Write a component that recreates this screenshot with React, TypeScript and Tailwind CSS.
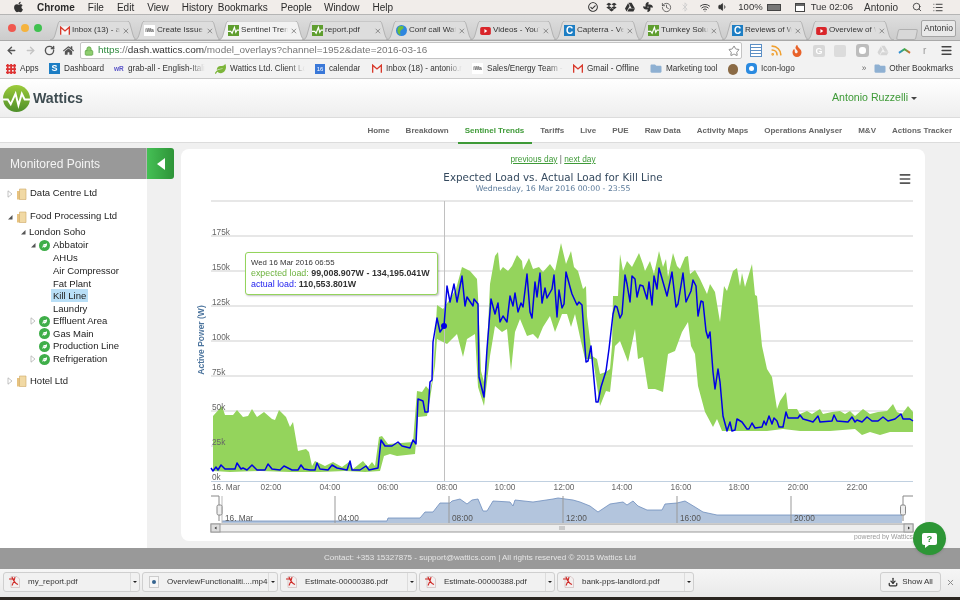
import { ArrowLeft, ArrowRight, RotateCw, Star, Lock, X, Search, List, Wifi, Volume1, History, Bluetooth, Download, Menu, Rss } from 'lucide-react';
import { FaApple, FaDropbox, FaGoogleDrive, FaHome, FaFolder, FaLeaf, FaRegCheckCircle, FaFan, FaFire } from 'react-icons/fa';

const UI = "font-['Liberation_Sans',Arial,sans-serif]";

const upper = [
  [213,417],[222,407],[225,416],[233,416],[237,411],[243,418],[248,417],[252,410],[257,418],[264,413],[272,420],[275,421],[279,411],[286,418],[290,428],[293,423],[298,452],[306,450],[309,453],[312,467],[315,462],[325,467],[333,463],[342,468],[349,463],[353,470],[363,462],[368,468],[372,463],[375,467],[379,438],[382,437],[388,445],[413,443],[417,392],[422,393],[426,387],[430,392],[433,377],[437,306],[443,310],[450,300],[456,290],[462,268],[470,272],[477,280],[478,297],[481,372],[484,383],[487,350],[490,285],[495,257],[498,253],[500,272],[503,268],[508,272],[512,267],[517,256],[522,262],[523,271],[529,259],[533,270],[539,268],[543,273],[550,265],[555,272],[561,244],[566,265],[571,252],[574,268],[578,272],[583,290],[586,287],[587,317],[592,357],[597,360],[600,375],[606,373],[610,370],[612,347],[613,297],[618,297],[620,255],[623,272],[627,262],[632,268],[639,254],[643,265],[645,272],[650,262],[654,275],[659,252],[663,268],[666,260],[668,278],[673,254],[677,267],[680,270],[685,258],[688,257],[690,275],[695,271],[700,280],[707,295],[710,285],[715,293],[720,323],[724,287],[727,292],[733,272],[737,269],[740,287],[742,274],[745,288],[752,265],[755,296],[757,297],[762,347],[767,370],[772,378],[777,410],[780,402],[786,393],[788,410],[797,410],[800,415],[807,412],[812,415],[820,410],[823,415],[832,413],[840,412],[845,415],[850,412],[855,417],[863,410],[870,415],[878,413],[887,412],[893,405],[897,413],[902,415],[908,407],[913,413],
];
const lower = [
  [213,472],[230,473],[260,472],[290,473],[320,473],[345,472],[365,473],[380,472],[384,457],[390,455],[397,457],[415,455],[418,418],[427,417],[430,400],[435,367],[437,340],[447,345],[452,340],[457,335],[463,358],[467,340],[475,335],[478,388],[484,407],[487,383],[490,357],[495,327],[502,333],[507,330],[511,372],[515,333],[520,320],[527,337],[533,335],[538,340],[543,328],[550,317],[555,333],[562,315],[567,315],[571,328],[575,315],[580,338],[585,360],[593,360],[600,407],[606,392],[610,393],[615,347],[620,342],[628,363],[635,330],[638,360],[643,358],[648,390],[655,390],[663,393],[668,355],[675,352],[682,333],[688,323],[691,347],[695,355],[698,387],[705,413],[713,428],[717,420],[722,432],[733,432],[767,432],[783,430],[800,432],[830,432],[855,430],[862,436],[870,433],[880,436],[890,433],[913,433],
];
const actual = [
  [211,469],[213,472],[216,468],[218,471],[221,466],[225,470],[235,470],[237,464],[241,470],[243,469],[247,471],[252,466],[257,471],[265,471],[268,465],[272,470],[280,471],[284,467],[292,471],[298,471],[301,466],[304,470],[310,471],[315,471],[317,464],[320,470],[328,471],[332,466],[337,469],[347,471],[350,462],[352,471],[360,471],[366,467],[369,471],[378,469],[381,441],[385,447],[392,447],[398,443],[402,447],[410,449],[413,441],[416,445],[418,400],[423,402],[425,413],[428,413],[430,383],[432,381],[433,343],[437,319],[440,333],[444,327],[447,287],[450,303],[454,285],[457,303],[462,277],[465,307],[467,298],[473,307],[474,300],[478,305],[479,378],[484,398],[487,350],[491,300],[495,315],[498,304],[500,323],[503,317],[507,323],[510,297],[513,307],[515,294],[518,313],[521,304],[523,308],[527,275],[530,313],[532,319],[535,283],[537,298],[540,274],[542,304],[545,289],[547,299],[552,290],[554,276],[557,318],[559,291],[562,309],[564,305],[566,273],[570,288],[572,295],[577,306],[579,303],[582,306],[586,363],[588,362],[591,347],[596,403],[598,403],[601,388],[606,372],[609,350],[613,315],[615,307],[617,308],[620,319],[622,315],[625,276],[627,285],[630,303],[632,277],[635,280],[637,298],[640,286],[643,287],[647,300],[649,283],[652,306],[654,277],[657,290],[659,269],[667,297],[672,273],[676,308],[678,305],[683,274],[686,303],[691,292],[693,281],[696,287],[698,317],[701,302],[703,303],[706,332],[708,339],[710,333],[713,373],[715,390],[718,370],[720,383],[723,417],[727,432],[730,423],[732,432],[735,431],[737,420],[742,423],[747,430],[749,430],[752,424],[755,429],[762,428],[764,422],[766,426],[769,417],[772,425],[774,419],[777,422],[779,428],[783,428],[786,413],[788,419],[798,419],[800,416],[803,420],[810,422],[813,423],[818,417],[820,423],[832,422],[834,416],[837,422],[848,423],[852,418],[855,423],[857,421],[862,423],[867,418],[872,422],[878,422],[883,418],[888,422],[895,420],[901,415],[903,420],[910,420],[913,422],
];
const navArea = [
  [222,522],[387,522],[388,519],[420,519],[425,513],[433,513],[440,504],[450,504],[452,502],[460,500],[467,505],[472,501],[478,500],[483,512],[487,512],[493,502],[510,503],[513,507],[515,501],[533,503],[553,500],[558,499],[573,501],[580,503],[590,507],[598,513],[610,505],[623,503],[627,506],[633,502],[638,507],[647,511],[662,511],[665,505],[677,504],[685,502],[695,508],[703,513],[717,516],[780,516],[902,516],
];
const pts = (a: number[][]) => a.map((p) => p.join(',')).join(' ');

const yTicks = [
  ['175k', 237], ['150k', 272], ['125k', 307], ['100k', 342], ['75k', 377], ['50k', 412], ['25k', 447], ['0k', 482],
] as const;
const xTicks = [['02:00', 271], ['04:00', 330], ['06:00', 388], ['08:00', 447], ['10:00', 505], ['12:00', 564], ['14:00', 622], ['16:00', 681], ['18:00', 739], ['20:00', 798], ['22:00', 857]] as const;
const navTicks = [['04:00', 335], ['08:00', 449], ['12:00', 563], ['16:00', 677], ['20:00', 791]] as const;

function WatticsIcon() {
  return (
    <svg viewBox="0 0 12 12" className="w-[11px] h-[11px] shrink-0">
      <rect width="12" height="12" fill="#5f9e2f" />
      <path d="M0 7h3l1.500 2L7 2.500 8.500 8 10 5.500h2" fill="none" stroke="#fff" strokeWidth="1.300" />
    </svg>
  );
}
function GmailIcon() {
  return (
    <svg viewBox="0 0 12 10" className="w-[10px] h-[9px] shrink-0">
      <rect width="12" height="10" fill="#f6f6f6" />
      <path d="M.8 10V1L6 5.500 11.200 1V10" fill="none" stroke="#d8392b" strokeWidth="1.600" />
    </svg>
  );
}
function IwaIcon() {
  return <span className="w-[11px] h-[11px] shrink-0 bg-white text-[5px] font-bold leading-[11px] text-[#555] text-center overflow-hidden">iWa</span>;
}
function YoutubeIcon() {
  return (
    <svg viewBox="0 0 12 9" className="w-[11px] h-[8px] shrink-0">
      <rect width="12" height="9" rx="2" fill="#d9252a" />
      <path d="M4.800 2.300 8 4.500 4.800 6.700z" fill="#fff" />
    </svg>
  );
}
function CapterraIcon() {
  return <span className="w-[11px] h-[11px] shrink-0 bg-[#1d7ec4] text-white text-[10px] font-bold leading-[11px] text-center">C</span>;
}
function GlobeIcon() {
  return (
    <svg viewBox="0 0 12 12" className="w-[11px] h-[11px] shrink-0">
      <circle cx="6" cy="6" r="6" fill="#2e86de" />
      <path d="M3 1.500 7 1c2 1 1.500 3-.5 4S4 8 5 11C2 10 0 6 3 1.500z" fill="#6fbf3a" />
    </svg>
  );
}
function PdfIcon() {
  return (
    <svg viewBox="0 0 12 12" className="w-[12px] h-[12px] shrink-0">
      <path d="M2 .5h6l2.500 2.500v8.500H2z" fill="#f4efef" stroke="#c9b3b3" strokeWidth=".6" />
      <path d="M0 3h6M3 1c1 3 2 6 6 7.500M3 9.500C4 7 5.500 5 6 1" fill="none" stroke="#cf2a27" strokeWidth="1.100" />
    </svg>
  );
}

const tabs = [
  { icon: <GmailIcon />, label: 'Inbox (13) - antonio' },
  { icon: <IwaIcon />, label: 'Create Issue - Wattics' },
  { icon: <WatticsIcon />, label: 'Sentinel Trends', active: true },
  { icon: <WatticsIcon />, label: 'report.pdf' },
  { icon: <GlobeIcon />, label: 'Conf call Wattics' },
  { icon: <YoutubeIcon />, label: 'Videos - YouTube' },
  { icon: <CapterraIcon />, label: 'Capterra - Vendor' },
  { icon: <WatticsIcon />, label: 'Turnkey Solutions' },
  { icon: <CapterraIcon />, label: 'Reviews of Wattics' },
  { icon: <YoutubeIcon />, label: 'Overview of Wattics' },
];

function Tab({ icon, label, active }: { icon: React.ReactNode; label: string; active?: boolean }) {
  return (
    <div className="relative w-[88px] h-[19px] -mr-[4px] shrink-0">
      <svg viewBox="0 0 88 19" className="absolute inset-0 w-full h-full">
        <path d="M0 19C3 19 4 17 5 14L8 3C8.500 1 9.500 0 11 0H77C78.500 0 79.500 1 80 3L83 14C84 17 85 19 88 19Z" fill={active ? '#f2f2f2' : '#dddddd'} stroke="#a9a9a9" strokeWidth=".8" />
      </svg>
      <div className="relative flex items-center h-full pl-[10px] pr-[8px] gap-[2px]">
        {icon}
        <span className="w-[49px] overflow-hidden whitespace-nowrap text-[8.100px] text-[#333] [mask-image:linear-gradient(to_right,black_88%,transparent)]">{label}</span>
        <X className="ml-auto w-[8px] h-[8px] text-[#777]" strokeWidth={2.500} />
      </div>
    </div>
  );
}

function BmFolder() {
  return <FaFolder className="w-[12px] h-[11px] text-[#8eb0d2] shrink-0" />;
}

const bookmarks = [
  { w: 'w-[43px]', icon: <span className="w-[10px] h-[10px] shrink-0 bg-[radial-gradient(#d33_1.500px,transparent_1.500px)] bg-[length:3.400px_3.400px]" />, label: 'Apps' },
  { w: 'w-[65px]', icon: <span className="w-[11px] h-[11px] shrink-0 bg-[#1d7ec4] text-white text-[9px] font-bold leading-[11px] text-center">S</span>, label: 'Dashboard' },
  { w: 'w-[101px]', icon: <span className="w-[10px] text-[6.500px] font-bold text-[#5a55c8] shrink-0">wR</span>, label: 'grab-all - English-Italian', fade: true },
  { w: 'w-[100px]', icon: <FaLeaf className="w-[11px] h-[10px] text-[#7cb53a] shrink-0" />, label: 'Wattics Ltd. Client Login', fade: true },
  { w: 'w-[57px]', icon: <span className="w-[10px] h-[10px] shrink-0 bg-[#3a78d8] text-white text-[6px] leading-[10px] text-center">16</span>, label: 'calendar' },
  { w: 'w-[100px]', icon: <GmailIcon />, label: 'Inbox (18) - antonio.ruzzelli', fade: true },
  { w: 'w-[101px]', icon: <IwaIcon />, label: 'Sales/Energy Team - Wattics', fade: true },
  { w: 'w-[77px]', icon: <GmailIcon />, label: 'Gmail - Offline' },
  { w: 'w-[78px]', icon: <BmFolder />, label: 'Marketing tool' },
  { w: 'w-[18px]', icon: <span className="w-[10px] h-[11px] shrink-0 rounded-full bg-[#8a6a45]" />, label: '' },
  { w: 'w-[64px]', icon: <span className="w-[11px] h-[11px] shrink-0 rounded-sm bg-[#2a8ae0] flex items-center justify-center"><span className="w-[5px] h-[5px] rounded-full bg-white" /></span>, label: 'Icon-logo' },
];

const navItems = ['Home', 'Breakdown', 'Sentinel Trends', 'Tariffs', 'Live', 'PUE', 'Raw Data', 'Activity Maps', 'Operations Analyser', 'M&V', 'Actions Tracker'];

function Caret({ open }: { open?: boolean }) {
  return open ? (
    <svg viewBox="0 0 6 6" className="w-[6px] h-[6px] shrink-0"><path d="M5.500 1v4.500H1z" fill="#555" /></svg>
  ) : (
    <svg viewBox="0 0 6 8" className="w-[6px] h-[8px] shrink-0"><path d="M1 .8 5 4 1 7.200z" fill="#fff" stroke="#aaa" strokeWidth=".7" /></svg>
  );
}
function TreeFolder() {
  return (
    <svg viewBox="0 0 11 12" className="w-[11px] h-[12px] shrink-0">
      <path d="M1 3h3v8.500H1z" fill="#e7c27f" />
      <path d="M3.500 1H10v10.500H3.500z" fill="#f1d9a4" stroke="#cfa865" strokeWidth=".6" />
    </svg>
  );
}
function Leaf() {
  return (
    <span className="w-[11px] h-[11px] shrink-0 rounded-full bg-[#3fae49] flex items-center justify-center">
      <FaLeaf className="w-[5px] h-[5px] text-white" />
    </span>
  );
}

function CompanyRow({ label, open, className }: { label: string; open?: boolean; className: string }) {
  return (
    <div className={`flex items-center h-[13px] pl-[6px] gap-[3px] ${className}`}>
      <span className="w-[7px] flex justify-center"><Caret open={open} /></span>
      <TreeFolder />
      <span>{label}</span>
    </div>
  );
}
function SiteRow({ label, caret, open }: { label: string; caret?: boolean; open?: boolean }) {
  return (
    <div className="flex items-center h-[12.670px] pl-[30px] gap-[3px]">
      <span className="w-[6px] flex justify-center">{caret && <Caret open={open} />}</span>
      <Leaf />
      <span>{label}</span>
    </div>
  );
}
function LeafRow({ label, selected }: { label: string; selected?: boolean }) {
  return (
    <div className="flex items-center h-[12.670px] pl-[51px]">
      <span className={`px-[2px] h-[13px] leading-[13px] ${selected ? 'bg-[#b9dff7]' : ''}`}>{label}</span>
    </div>
  );
}

function DownloadItem({ name, w }: { name: string; w: string }) {
  return (
    <div className={`flex ${w} h-[20px] border border-[#cfcfcf] rounded-[3px] bg-[#f1f1f1] shrink-0`}>
      <div className="flex-1 flex items-center pl-[5px] gap-[7px] min-w-0 overflow-hidden">
        {name.endsWith('mp4') ? (
          <span className="w-[10px] h-[12px] mx-[1px] shrink-0 bg-[#f6f6f6] border border-[#ccc] flex items-center justify-center"><span className="w-[4px] h-[4px] rounded-full bg-[#35648f]" /></span>
        ) : <PdfIcon />}
        <span className="text-[8px] text-[#333] whitespace-nowrap">{name}</span>
      </div>
      <div className="w-[9px] border-l border-[#dcdcdc] flex items-center justify-center shrink-0">
        <span className="border-x-[2px] border-t-[2px] border-x-transparent border-t-[#222]" />
      </div>
    </div>
  );
}

export default function App() {
  return (
    <div className={`relative w-[960px] h-[600px] overflow-hidden flex flex-col bg-[#f0f0f0] blur-[0.45px] ${UI}`}>
      {/* mac menu bar */}
      <div className="h-[14px] shrink-0 flex items-center bg-[#f1edea] text-[10px] text-[#2a2a2a]">
        <FaApple className="ml-[13px] w-[11px] h-[12px] text-[#333]" />
        <span className="ml-[13px] font-bold">Chrome</span>
        <span className="ml-[13px]">File</span>
        <span className="ml-[13px]">Edit</span>
        <span className="ml-[13px]">View</span>
        <span className="ml-[13px]">History</span>
        <span className="ml-[5px]">Bookmarks</span>
        <span className="ml-[13px]">People</span>
        <span className="ml-[12px]">Window</span>
        <span className="ml-[13px]">Help</span>
        <div className="ml-auto flex items-center text-[#333]">
          <FaRegCheckCircle className="w-[10px] h-[10px]" />
          <FaDropbox className="ml-[8px] w-[11px] h-[10px]" />
          <FaGoogleDrive className="ml-[8px] w-[10px] h-[10px]" />
          <FaFan className="ml-[8px] w-[10px] h-[10px]" />
          <History className="ml-[8px] w-[11px] h-[11px]" strokeWidth={1.500} />
          <Bluetooth className="ml-[8px] w-[10px] h-[10px] text-[#ccc]" />
          <Wifi className="ml-[9px] w-[12px] h-[11px]" />
          <Volume1 className="ml-[7px] w-[10px] h-[10px]" fill="#333" />
          <span className="ml-[10px] text-[9.500px]">100%</span>
          <span className="ml-[4px] w-[14px] h-[7px] border border-[#444] bg-[#777]" />
          <span className="ml-[14px] w-[10px] h-[9px] border border-[#444] bg-[linear-gradient(#666_2px,#fff_2px)]" />
          <span className="ml-[6px] text-[9.500px]">Tue 02:06</span>
          <span className="ml-[11px] text-[10px] font-medium">Antonio</span>
          <Search className="ml-[14px] w-[10px] h-[10px]" />
          <List className="ml-[10px] mr-[16px] w-[12px] h-[11px]" />
        </div>
      </div>

      {/* tab strip */}
      <div className="relative h-[27px] shrink-0 flex items-end bg-gradient-to-b from-[#dedede] to-[#cccccc] border-t border-[#b5b5b5] border-b border-b-[#a9a9a9]">
        <div className="flex gap-[5px] self-center ml-[8px] mr-[7px] w-[35px]">
          <span className="w-[8px] h-[8px] rounded-full bg-[#f0584f]" />
          <span className="w-[8px] h-[8px] rounded-full bg-[#f5b33d]" />
          <span className="w-[8px] h-[8px] rounded-full bg-[#3fc14f]" />
        </div>
        {tabs.map((t) => <Tab key={t.label} {...t} />)}
        <div className="ml-[7px] w-[20px] h-[11px] rounded-[2px] border border-[#b0b0b0] bg-[#d8d8d8] -skew-x-12" />
        <div className="ml-auto mr-[4px] self-start mt-[5px] w-[35px] h-[17px] rounded-[2px] border border-[#a5a5a5] bg-[#e9e9e9] text-[8.500px] text-[#333] text-center leading-[15px]">Antonio</div>
      </div>

      {/* toolbar */}
      <div className="h-[19px] shrink-0 flex items-center bg-[#f2f2f2]">
        <ArrowLeft className="ml-[6px] w-[11px] h-[11px] text-[#555]" strokeWidth={3} />
        <ArrowRight className="ml-[8px] w-[11px] h-[11px] text-[#c4c4c4]" strokeWidth={3} />
        <RotateCw className="ml-[8px] w-[11px] h-[11px] text-[#555]" strokeWidth={3} />
        <FaHome className="ml-[8px] w-[11px] h-[11px] text-[#555]" />
        <div className="ml-[6px] w-[662px] h-[17px] flex items-center bg-white border border-[#c4c4c4] rounded-[2px] text-[9.950px] whitespace-nowrap relative">
          <Lock className="ml-[3px] w-[10px] h-[10px] text-[#62a84a]" fill="#8fce6f" />
          <span className="ml-[4px] text-[#2e8b3e]">https</span>
          <span className="text-[#777]">://</span>
          <span className="text-[#333]">dash.wattics.com</span>
          <span className="text-[#777]">/model_overlays?channel=1952&amp;date=2016-03-16</span>
          <Star className="absolute right-[1px] w-[12px] h-[12px] text-[#8a8a8a]" />
        </div>
        <div className="flex items-center ml-[8px]">
          <span className="w-[12px] h-[13px] border border-[#5c8fc5] bg-[repeating-linear-gradient(#fff_0px,#fff_2px,#5c8fc5_2px,#5c8fc5_3px)]" />
          <Rss className="ml-[8px] w-[13px] h-[13px] text-[#f0a030]" strokeWidth={3} />
          <FaFire className="ml-[8px] w-[12px] h-[12px] text-[#e8622a]" />
          <span className="ml-[10px] w-[12px] h-[12px] rounded-[2px] bg-[#d8d8d8] text-white text-[9px] font-bold leading-[12px] text-center">G</span>
          <span className="ml-[9px] w-[12px] h-[12px] rounded-[2px] bg-[#dcdcdc]" />
          <span className="ml-[10px] w-[13px] h-[13px] rounded-[3px] bg-[#bdbdbd] flex items-center justify-center"><span className="w-[7px] h-[7px] rounded-[3px] bg-white" /></span>
          <FaGoogleDrive className="ml-[8px] w-[12px] h-[11px] text-[#d5d5d5]" />
          <svg viewBox="0 0 14 6" className="ml-[9px] w-[13px] h-[6px]">
            <path d="M1 5 7 1 13 5" fill="none" stroke="url(#rb)" strokeWidth="2" />
            <defs><linearGradient id="rb"><stop stopColor="#2a8ae0" /><stop offset=".5" stopColor="#3fae49" /><stop offset="1" stopColor="#e8622a" /></linearGradient></defs>
          </svg>
          <span className="ml-[12px] text-[10px] text-[#999]">r</span>
          <Menu className="ml-[14px] w-[13px] h-[13px] text-[#444]" strokeWidth={3} />
        </div>
      </div>

      {/* bookmarks */}
      <div className="h-[19px] shrink-0 flex items-center pl-[6px] bg-[#f2f2f2] border-b border-[#c8c8c8] text-[8.200px] text-[#333]">
        {bookmarks.map((b, i) => (
          <div key={i} className={`flex items-center gap-[4px] shrink-0 ${b.w} ${b.fade ? 'pr-[10px]' : ''}`}>
            {b.icon}
            {b.label && (
              <span className={`min-w-0 whitespace-nowrap overflow-hidden ${b.fade ? '[mask-image:linear-gradient(to_right,black_80%,transparent)]' : ''}`}>{b.label}</span>
            )}
          </div>
        ))}
        <span className="ml-auto text-[#666]">»</span>
        <div className="flex items-center gap-[3px] ml-[8px] mr-[7px]">
          <BmFolder />
          <span>Other Bookmarks</span>
        </div>
      </div>

      {/* app header */}
      <div className="h-[39px] shrink-0 flex items-center bg-gradient-to-b from-[#ffffff] to-[#eeeeee] border-b border-[#dcdcdc]">
        <svg viewBox="0 0 28 28" className="ml-[3px] w-[27px] h-[27px]">
          <defs>
            <linearGradient id="lg" x1="0" y1="0" x2="0" y2="1"><stop stopColor="#9ccb3b" /><stop offset="1" stopColor="#4e8f2a" /></linearGradient>
          </defs>
          <circle cx="14" cy="14" r="14" fill="url(#lg)" />
          <path d="M0 15h5l3 5 5-11 3 12 3.500-12 3 6h6" fill="none" stroke="#fff" strokeWidth="2" />
        </svg>
        <span className="ml-[3px] pt-[1px] text-[14.200px] font-bold text-[#3f4d52]">Wattics</span>
        <span className="ml-auto text-[10.600px] text-[#3e9a37]">Antonio Ruzzelli</span>
        <span className="ml-[3px] mr-[43px] border-x-[3px] border-t-[3px] border-x-transparent border-t-[#444]" />
      </div>

      {/* nav */}
      <div className="h-[25px] shrink-0 flex items-center justify-end gap-[16px] pr-[8px] pt-[1px] bg-white border-b border-[#dcdcdc] text-[8px] font-bold text-[#666]">
        {navItems.map((n) =>
          n === 'Sentinel Trends' ? (
            <span key={n} className="relative text-[#3e9a37]">
              {n}
              <span className="absolute left-[-7px] right-[-8px] top-[17px] h-[2px] bg-[#3e9a37]" />
            </span>
          ) : (
            <span key={n}>{n}</span>
          ),
        )}
      </div>

      {/* main */}
      <div className="flex-1 min-h-0 flex bg-[#f0f0f0]">
        <aside className="w-[147px] shrink-0 mt-[5px] bg-white flex flex-col text-[9.500px] text-[#222] whitespace-nowrap">
          <div className="h-[31px] shrink-0 flex items-center pl-[10px] bg-[#999] text-[#f4f4f4] text-[12px] border-r border-[#b5b5b5]">Monitored Points</div>
          <CompanyRow label="Data Centre Ltd" className="mt-[8px]" />
          <CompanyRow label="Food Processing Ltd" open className="mt-[10px]" />
          <div className="flex items-center h-[16px] pt-[2px] pl-[20px] gap-[3px]">
            <span className="w-[6px] flex justify-center"><Caret open /></span>
            <span>London Soho</span>
          </div>
          <SiteRow label="Abbatoir" caret open />
          <LeafRow label="AHUs" />
          <LeafRow label="Air Compressor" />
          <LeafRow label="Fat Plant" />
          <LeafRow label="Kill Line" selected />
          <LeafRow label="Laundry" />
          <SiteRow label="Effluent Area" caret />
          <SiteRow label="Gas Main" />
          <SiteRow label="Production Line" />
          <SiteRow label="Refrigeration" caret />
          <CompanyRow label="Hotel Ltd" className="mt-[9px]" />
        </aside>

        <button className="w-[27px] h-[31px] mt-[5px] shrink-0 rounded-r-[3px] bg-gradient-to-r from-[#45c055] to-[#2e9438] flex items-center justify-center">
          <svg viewBox="0 0 8 12" className="w-[8px] h-[12px]"><path d="M8 0v12L0 6z" fill="#fff" /></svg>
        </button>

        {/* chart card */}
        <div className="relative ml-[7px] mt-[6px] mb-[7px] w-[744px] rounded-[8px] bg-white flex flex-col items-center overflow-hidden">
          <div className="mt-[5px] text-[8.300px] text-[#3e9a37] leading-[10px]">
            <span className="underline">previous day</span> <span className="text-[#555]">|</span> <span className="underline">next day</span>
          </div>
          <div className="mt-[7px] font-['DejaVu_Sans',sans-serif] text-[10.350px] leading-[13px] text-[#34495e]">Expected Load vs. Actual Load for Kill Line</div>
          <div className="font-['DejaVu_Sans',sans-serif] text-[7.800px] leading-[9px] text-[#5a7a9a]">Wednesday, 16 Mar 2016 00:00 - 23:55</div>

          <Menu className="absolute right-[13px] top-[23px] w-[14px] h-[14px] text-[#555]" strokeWidth={2.800} />

          <svg viewBox="181 198 744 343" className="mt-[4px] w-[744px] h-[343px] shrink-0">
            <line x1="211" x2="913" y1="202" y2="202" stroke="#cfcfcf" />
            {yTicks.slice(0, 7).map(([l, y]) => (
              <line key={l} x1="211" x2="913" y1={y} y2={y} stroke="#cfcfcf" />
            ))}
            <line x1="211" x2="913" y1="482.500" y2="482.500" stroke="#c0d0e0" />
            <polygon points={pts([...upper, ...[...lower].reverse()])} fill="#94d45c" />
            <line x1="444.500" x2="444.500" y1="202" y2="482" stroke="#c0c0c0" />
            <polyline points={pts(actual)} fill="none" stroke="#0000e6" strokeWidth="1.500" strokeLinejoin="round" />
            <circle cx="444" cy="327" r="3" fill="#0000e6" />
            {yTicks.map(([l, y]) => (
              <text key={l} x="212" y={y - 1} className="text-[8.300px] fill-[#666]">{l}</text>
            ))}
            <text transform="translate(204 341) rotate(-90)" textAnchor="middle" className="text-[8.500px] font-bold fill-[#4d759e]">Active Power (W)</text>
            <text x="212" y="491" className="text-[8.300px] fill-[#666]">16. Mar</text>
            {xTicks.map(([l, x]) => (
              <text key={l} x={x} y="491" textAnchor="middle" className="text-[8.300px] fill-[#666]">{l}</text>
            ))}

            {/* navigator */}
            <polygon points={pts([...navArea, [902, 524], [222, 524]])} fill="#b3c5dd" />
            <polyline points={pts(navArea)} fill="none" stroke="#6d8dbd" strokeWidth=".8" />
            <line x1="222" x2="222" y1="497" y2="524" stroke="#bbb" />
            {navTicks.map(([l, x]) => (
              <g key={l}>
                <line x1={x} x2={x} y1="497" y2="524" stroke="#999" />
                <text x={x + 3} y="522" className="text-[8.300px] fill-[#555]">{l}</text>
              </g>
            ))}
            <text x="225" y="522" className="text-[8.300px] fill-[#555]">16. Mar</text>
            <path d="M211 497h8v25M913 497h-10v25" fill="none" stroke="#888" />
            <rect x="217" y="506" width="5" height="10" rx="1.500" fill="#eee" stroke="#888" />
            <rect x="900.500" y="506" width="5" height="10" rx="1.500" fill="#eee" stroke="#888" />
            <rect x="211" y="525" width="702" height="8" fill="#eeeeee" stroke="#999" />
            <rect x="211" y="525" width="9" height="8" fill="#ddd" stroke="#999" />
            <rect x="904" y="525" width="9" height="8" fill="#ddd" stroke="#999" />
            <path d="M216.500 527.500v3l-2-1.500zM908 527.500v3l2-1.500z" fill="#333" />
            <path d="M560 527v4M562 527v4M564 527v4" stroke="#888" strokeWidth=".7" />
            <text x="913" y="540" textAnchor="end" className="text-[6.800px] fill-[#999]">powered by Wattics</text>
          </svg>

          {/* tooltip */}
          <div className="absolute left-[64px] top-[103px] w-[193px] h-[43px] rounded-[3px] border border-[#94d45c] bg-white shadow-[1px_1px_2px_rgba(0,0,0,.25)] px-[5px] pt-[5px] text-[8.900px] leading-[11px] whitespace-nowrap">
            <div className="text-[7.800px] leading-[10px] text-[#333]">Wed 16 Mar 2016 06:55</div>
            <div className="text-[#333] font-bold"><span className="text-[#6eb33f] font-normal">expected load: </span>99,008.907W - 134,195.041W</div>
            <div className="text-[#333] font-bold"><span className="text-[#2222ee] font-normal">actual load: </span>110,553.801W</div>
          </div>
        </div>
      </div>

      {/* footer */}
      <div className="h-[21px] shrink-0 flex items-center justify-center bg-[#999] text-[8.030px] text-[#e6e6e6]">
        Contact: +353 15327875 - support@wattics.com | All rights reserved © 2015 Wattics Ltd
      </div>

      {/* download shelf */}
      <div className="h-[28px] shrink-0 flex items-center pl-[3px] pb-[2px] gap-[2px] bg-gradient-to-b from-[#f6f6f6] to-[#e9e9e9]">
        <DownloadItem name="my_report.pdf" w="w-[137px]" />
        <DownloadItem name="OverviewFunctionaliti....mp4" w="w-[136px]" />
        <DownloadItem name="Estimate-00000386.pdf" w="w-[137px]" />
        <DownloadItem name="Estimate-00000388.pdf" w="w-[136px]" />
        <DownloadItem name="bank-pps-landlord.pdf" w="w-[137px]" />
        <div className="ml-auto w-[61px] h-[20px] border border-[#cfcfcf] rounded-[3px] bg-[#f1f1f1] flex items-center justify-center gap-[4px] text-[8px] text-[#333]">
          <Download className="w-[10px] h-[10px]" strokeWidth={3} />
          Show All
        </div>
        <X className="ml-[3px] mr-[5px] w-[9px] h-[9px] text-[#888]" strokeWidth={2.500} />
      </div>
      <div className="h-[3px] shrink-0 bg-[#2a2520]" />

      {/* help chat bubble */}
      <div className="absolute left-[913px] top-[522px] w-[33px] h-[33px] rounded-full bg-[#2d9636] shadow flex items-center justify-center">
        <span className="relative w-[15px] h-[12px] rounded-[2px] bg-white text-[#2d9636] text-[9.500px] font-bold leading-[12px] text-center">
          ?
          <span className="absolute left-[3px] top-[12px] border-r-[4px] border-t-[3px] border-r-transparent border-t-white" />
        </span>
      </div>
    </div>
  );
}
